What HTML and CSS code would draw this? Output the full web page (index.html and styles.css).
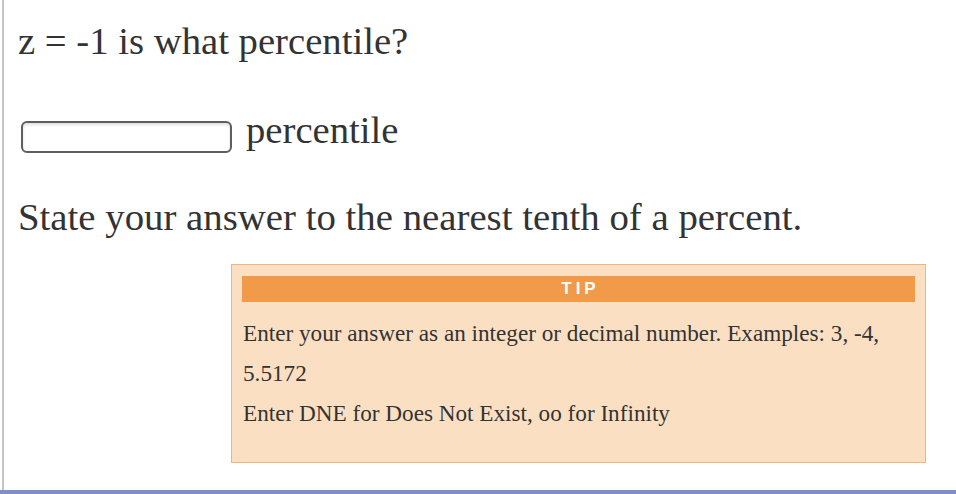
FILE: index.html
```html
<!DOCTYPE html>
<html lang="en">
<head>
<meta charset="utf-8">
<title>Percentile question</title>
<link rel="stylesheet" href="styles.css">
</head>
<body>
<div class="frame">
  <div class="panel">
    <p class="question">z = -1 is what percentile?</p>
    <div class="answer-row">
      <input class="answer-input" type="text" aria-label="answer">
      <span class="unit">percentile</span>
    </div>
    <p class="instruction">State your answer to the nearest tenth of a percent.</p>
    <div class="tip">
      <div class="tip-header">TIP</div>
      <p class="tip-text">Enter your answer as an integer or decimal number. Examples: 3, -4, 5.5172</p>
      <p class="tip-text">Enter DNE for Does Not Exist, oo for Infinity</p>
    </div>
  </div>
</div>
</body>
</html>
```

FILE: styles.css
```css
html, body {
  margin: 0;
  padding: 0;
  background: #ffffff;
}

body {
  font-family: "Liberation Serif", "Times New Roman", serif;
  color: #333333;
}

.frame {
  height: 490px;
  border-bottom: 4px solid #7f90c4;
  overflow: hidden;
}

.panel {
  margin-left: 2px;
  height: 100%;
  border-left: 2px solid #c6c6c6;
  padding: 19px 0 0 14px;
  box-sizing: border-box;
}

.question {
  margin: 0;
  font-size: 38.7px;
  line-height: 44px;
}

.answer-row {
  margin-top: 45px;
  display: flex;
  align-items: flex-start;
  gap: 14px;
}

.answer-input {
  margin: 13px 0 0 3px;
  width: 211px;
  height: 32px;
  box-sizing: border-box;
  border: 2px solid #5e5e5e;
  border-radius: 6px;
  background: #ffffff;
  box-shadow: inset 0 2px 3px rgba(0, 0, 0, 0.12);
  padding: 0 6px;
  outline: none;
}

.unit {
  font-size: 38.7px;
  line-height: 44px;
}

.instruction {
  margin: 42px 0 0 0;
  font-size: 38.8px;
  line-height: 44px;
}

.tip {
  margin: 25px 0 0 213px;
  width: 695px;
  box-sizing: border-box;
  border: 1px solid #f2b47a;
  background: #fbdfc3;
  padding: 11px 10px 29px 10px;
}

.tip-header {
  height: 26px;
  background: #f09a4a;
  color: #ffffff;
  font-family: "Liberation Sans", Arial, sans-serif;
  font-weight: bold;
  font-size: 17px;
  letter-spacing: 4px;
  text-indent: 4px;
  line-height: 26px;
  text-align: center;
  margin-bottom: 11px;
}

.tip-text {
  margin: 0;
  padding-left: 1px;
  font-size: 23.2px;
  line-height: 40px;
  color: #333333;
}
```
